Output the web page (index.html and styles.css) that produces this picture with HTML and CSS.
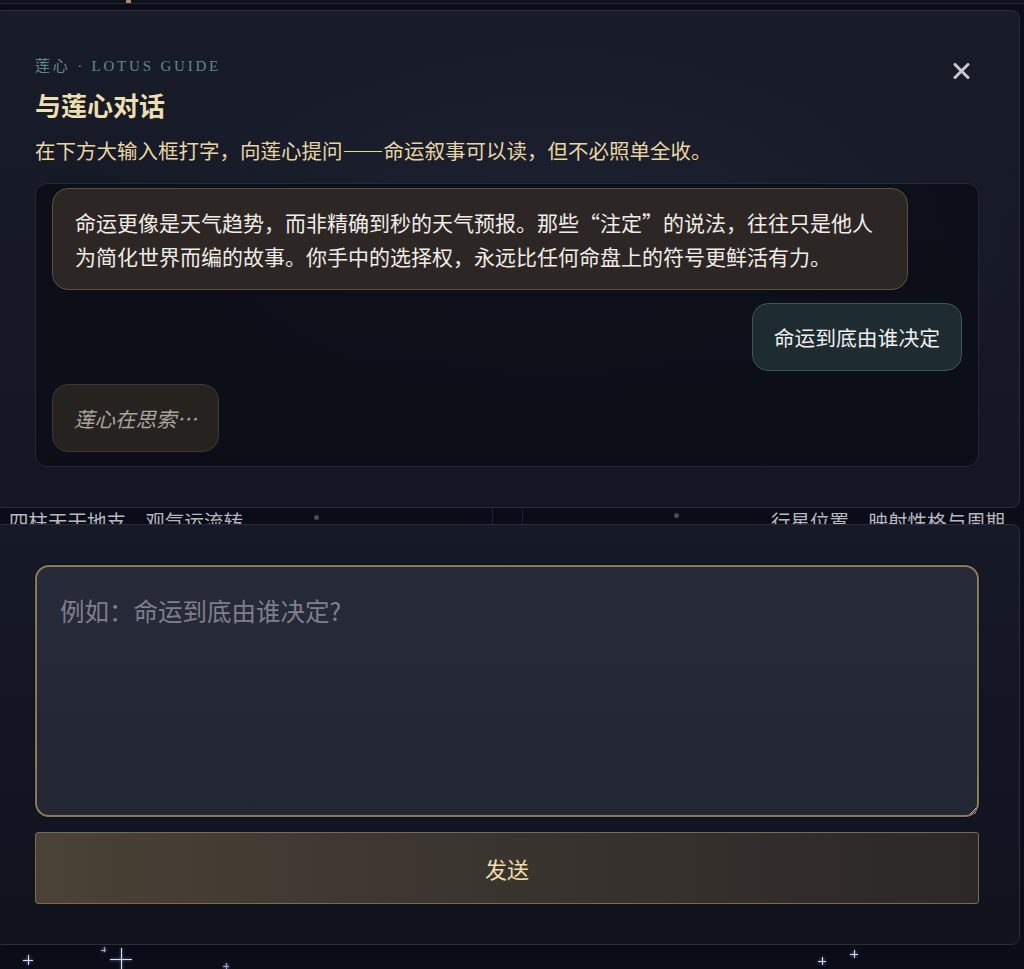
FILE: index.html
```html
<!DOCTYPE html>
<html lang="zh-CN">
<head>
    <meta charset="utf-8">
    <title>与莲心对话</title>
    <link rel="stylesheet" href="styles.css">
</head>
<body>

    <!-- 背景页面（被对话面板遮住） -->
    <div class="backdrop">
        <div class="top-edge">
            <span class="edge-mark"></span>
        </div>
        <div class="hero"></div>
        <div class="feature-row">
            <div class="feature">四柱天干地支，观气运流转</div>
            <div class="feature feature-right">行星位置，映射性格与周期</div>
        </div>

        <span class="dot" style="left:314px; top:515px"></span>
        <span class="dot" style="left:674px; top:513px"></span>
        <span class="star" style="left:23px; top:955px; width:10px; height:10px"></span>
        <span class="star small" style="left:101px; top:947px; width:5px; height:5px"></span>
        <span class="star" style="left:110px; top:948px; width:22px; height:22px"></span>
        <span class="star small" style="left:223px; top:963px; width:6px; height:6px"></span>
        <span class="star" style="left:818px; top:957px; width:8px; height:8px"></span>
        <span class="star" style="left:850px; top:950px; width:8px; height:8px"></span>
    </div>

    <section class="panel panel-chat">
        <div class="panel-head">
            <div class="head-text">
                <div class="eyebrow">莲心 · LOTUS GUIDE</div>
                <h2 class="title">与莲心对话</h2>
            </div>
            <button class="close" aria-label="关闭">
                <svg width="17" height="16" viewBox="0 0 17 16">
                    <path d="M2 1.5 L15 14.5 M15 1.5 L2 14.5" stroke="#c9c9cd" stroke-width="3" stroke-linecap="round"/>
                </svg>
            </button>
        </div>
        <p class="intro">在下方大输入框打字，向莲心提问——命运叙事可以读，但不必照单全收。</p>

        <div class="chat-log">
            <div class="msg msg-guide">命运更像是天气趋势，而非精确到秒的天气预报。那些“注定”的说法，往往只是他人为简化世界而编的故事。你手中的选择权，永远比任何命盘上的符号更鲜活有力。</div>
            <div class="msg msg-user">命运到底由谁决定</div>
            <div class="msg msg-thinking">莲心在思索…</div>
        </div>
    </section>

    <section class="panel panel-input">
        <textarea class="ask" placeholder="例如：命运到底由谁决定?"></textarea>
        <button class="send">发送</button>
    </section>

</body>
</html>
```

FILE: styles.css
```css
body {
    margin: 0;
    background-color: #0a0c17;
    font-family: "Noto Sans CJK SC", "Noto Sans", sans-serif;
    height: 969px;
    overflow: hidden;
    position: relative;
}

/* 背景页面 */
.backdrop {
    position: relative;
    height: 969px;
}
.top-edge {
    height: 3px;
    border-bottom: 1px solid #262838;
    background-color: #0f111d;
    position: relative;
}
.edge-mark {
    position: absolute;
    left: 126px;
    top: 0;
    width: 5px;
    height: 3px;
    background-color: #a48e6c;
}
.hero {
    height: 502px;
}
.feature-row {
    display: grid;
    grid-template-columns: 493px 1fr;
    gap: 29px;
}
.feature {
    color: #b7b7be;
    font-size: 19.5px;
    line-height: 30px;
    padding-left: 9px;
    border-right: 1px solid #1f2132;
}
.feature-right {
    text-align: right;
    padding-left: 0;
    padding-right: 19px;
    border-right: 0;
    border-left: 1px solid #1f2132;
}
.dot {
    position: absolute;
    width: 5px;
    height: 5px;
    border-radius: 50%;
    background-color: #4a4b57;
}
.star {
    position: absolute;
}
.star:before,
.star:after {
    content: "";
    position: absolute;
    background-color: #d9def5;
    box-shadow: 0 0 3px #8fa0e0;
}
.star:before {
    left: 0;
    right: 0;
    top: 50%;
    height: 1px;
}
.star:after {
    top: 0;
    bottom: 0;
    left: 50%;
    width: 1px;
}
.star.small:before,
.star.small:after {
    background-color: #9ea2b8;
}

/* 面板 */
.panel {
    position: absolute;
    left: -6px;
    width: 1026px;
    box-sizing: border-box;
    padding: 40px;
    border: 1px solid #2a2d3b;
    border-radius: 8px;
}
.panel-chat {
    top: 10px;
    background: radial-gradient(ellipse at 55% 45%, #1d2030 0%, rgba(29, 32, 48, 0) 60%),
                linear-gradient(180deg, #181b28 0%, #141723 100%);
}
.panel-head {
    display: flex;
    align-items: flex-start;
    justify-content: space-between;
    padding-top: 5px;
}
.eyebrow {
    font-family: "Liberation Serif", "Noto Sans CJK SC", serif;
    font-size: 15px;
    line-height: 20px;
    letter-spacing: 2.8px;
    color: #5e8b89;
}
.title {
    margin: 12px 0 0;
    font-size: 26px;
    line-height: 34px;
    font-weight: bold;
    color: #eedfb0;
}
.close {
    width: 30px;
    height: 30px;
    margin: 0 3px 0 0;
    padding: 0;
    border: 0;
    background: none;
    display: flex;
    align-items: center;
    justify-content: center;
    cursor: pointer;
}
.intro {
    margin: 13px 0 0;
    font-size: 20.5px;
    line-height: 30px;
    color: #e8d6a2;
}

.chat-log {
    margin-top: 18px;
    height: 284px;
    box-sizing: border-box;
    overflow: hidden;
    padding: 4px 16px 15px;
    display: flex;
    flex-direction: column;
    gap: 13px;
    background-color: rgba(10, 11, 20, 0.75);
    border: 1px solid #252736;
    border-radius: 12px;
}
.msg {
    box-sizing: border-box;
    max-width: 856px;
    padding: 16px 22px;
    font-size: 21px;
    line-height: 34px;
    border: 1px solid;
    border-radius: 16px;
}
.msg-guide {
    align-self: flex-start;
    color: #f1ede6;
    background-color: #2c2724;
    border-color: #5e513c;
}
.msg-user {
    align-self: flex-end;
    padding: 16px 21px;
    font-size: 20.8px;
    color: #eef0ee;
    background-color: #1e2b30;
    border-color: #36585a;
}
.msg-thinking {
    align-self: flex-start;
    padding: 16px 21px;
    font-size: 20.5px;
    color: #a9a59e;
    font-style: italic;
    background-color: #25221f;
    border-color: #3e3830;
}

/* 输入区 */
.panel-input {
    top: 524px;
    display: flex;
    flex-direction: column;
    gap: 15px;
    background: linear-gradient(180deg, #161926 0%, #10131e 100%);
}
.ask {
    display: block;
    width: 100%;
    height: 252px;
    box-sizing: border-box;
    margin: 0;
    padding: 26px 23px;
    font-family: inherit;
    font-size: 24.5px;
    line-height: 36px;
    color: #e8e8ec;
    background: linear-gradient(180deg, #272a39 0%, #232633 100%);
    border: 2px solid #8a7a5b;
    border-radius: 14px;
    box-shadow: 0 0 0 1px #0c0d14;
    outline: none;
    resize: vertical;
}
.ask::placeholder {
    color: #7e8089;
}
.send {
    display: block;
    width: 100%;
    height: 72px;
    margin: 0;
    padding: 0;
    font-family: inherit;
    font-size: 22px;
    color: #eedcab;
    background: linear-gradient(90deg, #4a4236 0%, #3a342f 50%, #2c2826 100%);
    border: 1px solid #7a6b50;
    border-radius: 3px;
    cursor: pointer;
}
```
